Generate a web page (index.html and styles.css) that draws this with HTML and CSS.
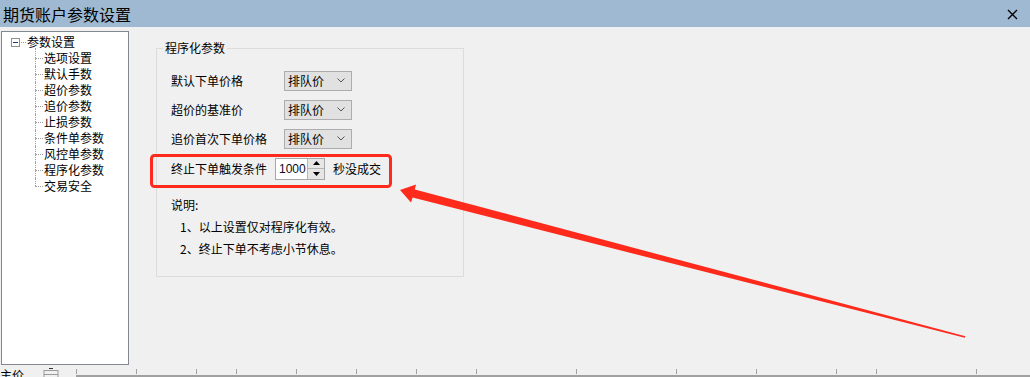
FILE: index.html
```html
<!DOCTYPE html>
<html lang="zh-CN">
<head>
    <meta charset="UTF-8">
    <title>期货账户参数设置</title>
    <link rel="stylesheet" href="styles.css">
</head>
<body>
    <!-- Title bar -->
    <div class="titlebar">
        <span class="title">期货账户参数设置</span>
        <svg class="close" width="11" height="11" viewBox="0 0 11 11">
            <path d="M1 1 L10 10 M10 1 L1 10" stroke="#000" stroke-width="1.4" fill="none"/>
        </svg>
    </div>

    <div class="main">
        <!-- Settings tree -->
        <div class="tree">
            <div class="tree-root">
                <span class="toggle">
                    <svg width="9" height="9" viewBox="0 0 9 9">
                        <rect x="0.5" y="0.5" width="8" height="8" fill="#fff" stroke="#8e8f8f"/>
                        <path d="M2 4.5 H7" stroke="#1d3a74" stroke-width="1"/>
                    </svg>
                </span>
                <span class="root-dots"></span>
                <span>参数设置</span>
            </div>
            <ul class="tree-children">
                <li>选项设置</li>
                <li>默认手数</li>
                <li>超价参数</li>
                <li>追价参数</li>
                <li>止损参数</li>
                <li>条件单参数</li>
                <li>风控单参数</li>
                <li>程序化参数</li>
                <li>交易安全</li>
            </ul>
        </div>

        <!-- Programmatic params group -->
        <fieldset class="group">
            <legend>程序化参数</legend>

            <div class="row">
                <span class="label">默认下单价格</span>
                <div class="select">排队价<svg class="chev" width="8" height="5" viewBox="0 0 8 5"><path d="M0.5 0.5 L4 4 L7.5 0.5" stroke="#555" fill="none"/></svg></div>
            </div>
            <div class="row">
                <span class="label">超价的基准价</span>
                <div class="select">排队价<svg class="chev" width="8" height="5" viewBox="0 0 8 5"><path d="M0.5 0.5 L4 4 L7.5 0.5" stroke="#555" fill="none"/></svg></div>
            </div>
            <div class="row">
                <span class="label">追价首次下单价格</span>
                <div class="select">排队价<svg class="chev" width="8" height="5" viewBox="0 0 8 5"><path d="M0.5 0.5 L4 4 L7.5 0.5" stroke="#555" fill="none"/></svg></div>
            </div>
            <div class="row row-stop">
                <span>终止下单触发条件</span>
                <div class="spinner">
                    <span class="spin-value">1000</span>
                    <div class="spin-buttons">
                        <span class="spin-btn"><svg width="7" height="4" viewBox="0 0 7 4"><path d="M3.5 0 L7 4 L0 4 Z" fill="#000"/></svg></span>
                        <span class="spin-btn"><svg width="7" height="4" viewBox="0 0 7 4"><path d="M0 0 L7 0 L3.5 4 Z" fill="#000"/></svg></span>
                    </div>
                </div>
                <span>秒没成交</span>
            </div>

            <div class="notes">
                <div>说明:</div>
                <div class="note">1、以上设置仅对程序化有效。</div>
                <div class="note">2、终止下单不考虑小节休息。</div>
            </div>
        </fieldset>
    </div>

    <!-- Bottom strip (cut-off window behind) -->
    <div class="bottom">
        <span class="bottom-text">主价</span>
        <svg class="bottom-icon" width="16" height="10" viewBox="0 0 16 10">
            <path d="M1 3.5 H15 M1 7.5 H15 M1 3 V10 M15 3 V10" stroke="#9a9a9a" fill="none"/>
            <path d="M6 1.5 H10" stroke="#333" fill="none"/>
        </svg>
        <div class="ruler">
            <span style="width:60px"></span>
            <span style="width:60px"></span>
            <span style="width:40px"></span>
            <span style="width:60px"></span>
            <span style="width:60px"></span>
            <span style="width:60px"></span>
            <span style="width:60px"></span>
            <span style="width:100px"></span>
            <span style="width:100px"></span>
            <span style="width:80px"></span>
            <span style="width:80px"></span>
            <span style="width:40px"></span>
            <span style="width:100px"></span>
            <span class="ruler-end"></span>
        </div>
    </div>

    <!-- Annotation: red box and arrow -->
    <svg class="annotation" width="1030" height="377" viewBox="0 0 1030 377">
        <rect x="151.5" y="155.5" width="239" height="31" rx="3" fill="none" stroke="#fe2a1c" stroke-width="3"/>
        <polygon points="400,190 416,184.5 414.8,189.4 965.3,336.3 964.8,337.8 412.6,197.6 411,202.5" fill="#fe2a1c"/>
    </svg>
</body>
</html>
```

FILE: styles.css
```css
body {
    margin: 0;
    width: 1030px;
    height: 377px;
    overflow: hidden;
    position: relative;
    background: #f0f0f0;
    font-family: "Noto Sans CJK SC", "Microsoft YaHei", sans-serif;
    font-size: 12px;
    color: #000;
}

/* Title bar */
.titlebar {
    height: 27px;
    background: #9fb9d3;
    display: flex;
    align-items: center;
    justify-content: space-between;
    padding: 1px 12px 0 3px;
    box-sizing: border-box;
}
.title {
    font-size: 16px;
    line-height: 20px;
}
.close {
    display: block;
}

.main {
    display: flex;
    align-items: flex-start;
    padding-top: 4px;
    height: 338px;
    box-sizing: border-box;
}

/* Tree */
.tree {
    width: 128px;
    height: 334px;
    margin-left: 1px;
    box-sizing: border-box;
    border: 1px solid #828790;
    background: #fff;
    padding-top: 2px;
    line-height: 16px;
}
.tree-root {
    display: flex;
    align-items: center;
    height: 16px;
    padding-left: 9px;
}
.toggle svg {
    display: block;
}
.root-dots {
    width: 5px;
    margin: 0 1px 0 1px;
    border-top: 1px dotted #a0a0a0;
}
.tree-children {
    list-style: none;
    margin: 0 0 0 33px;
    padding: 0;
}
.tree-children li {
    position: relative;
    padding-left: 9px;
    height: 16px;
}
.tree-children li::before {
    content: "";
    position: absolute;
    left: 0;
    top: 8px;
    width: 8px;
    border-top: 1px dotted #a0a0a0;
}
.tree-children li::after {
    content: "";
    position: absolute;
    left: 0;
    top: 0;
    height: 16px;
    border-left: 1px dotted #a0a0a0;
}
.tree-children li:first-child::after {
    top: -2px;
    height: 18px;
}
.tree-children li:last-child::after {
    height: 8px;
}

/* Group box */
.group {
    margin: 9px 0 0 27px;
    width: 308px;
    box-sizing: border-box;
    border: 1px solid #dcdcdc;
    padding: 10px 14px 16px 14px;
}
.group legend {
    padding: 0 2px;
    margin-left: -8px;
    line-height: 16px;
}
.row {
    display: flex;
    align-items: center;
    height: 29px;
}
.label {
    width: 113px;
}
.select {
    width: 68px;
    height: 20px;
    box-sizing: border-box;
    border: 1px solid #adadad;
    background: #e1e1e1;
    display: flex;
    align-items: center;
    justify-content: space-between;
    padding: 0 6px 0 3px;
    line-height: 18px;
}
.chev {
    display: block;
}
.row-stop {
    height: 31px;
    gap: 8px;
}
.spinner {
    display: flex;
    width: 50px;
    height: 22px;
    box-sizing: border-box;
    border: 1px solid #a7a7a7;
    background: #fff;
}
.spin-value {
    flex: 1;
    padding-left: 3px;
    line-height: 20px;
    font-family: "Liberation Sans", Arial, sans-serif;
    color: #0a0a2a;
}
.spin-buttons {
    width: 16px;
    display: flex;
    flex-direction: column;
    border-left: 1px solid #b5b5b5;
}
.spin-btn {
    flex: 1;
    display: flex;
    align-items: center;
    justify-content: center;
    background: #e6e6e6;
}
.spin-btn + .spin-btn {
    border-top: 1px solid #b5b5b5;
}
.spin-btn svg {
    display: block;
}

.notes {
    margin-top: 10px;
    line-height: 22px;
}
.note {
    padding-left: 9px;
}

/* Bottom strip */
.bottom {
    display: flex;
    align-items: flex-end;
    height: 12px;
    overflow: hidden;
}
.bottom-text {
    width: 43px;
    line-height: 16px;
    margin-bottom: -6px;
}
.bottom-icon {
    display: block;
    margin-right: 17px;
}
.ruler {
    flex: 1;
    display: flex;
    height: 6px;
    border-bottom: 2px solid #a0a0a0;
}
.ruler span {
    height: 5px;
    border-left: 1px solid #a0a0a0;
    box-sizing: border-box;
}
.ruler-end {
    flex: 1;
}

/* Annotation overlay */
.annotation {
    position: absolute;
    left: 0;
    top: 0;
    pointer-events: none;
}
```
